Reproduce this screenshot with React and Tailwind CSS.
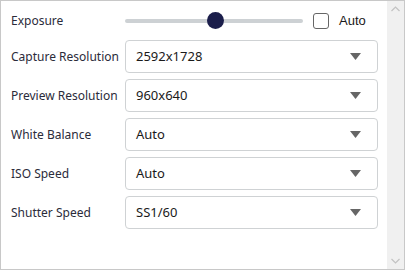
import { useState } from 'react';

const ROWS = [
  { label: 'Capture Resolution', value: '2592x1728' },
  { label: 'Preview Resolution', value: '960x640' },
  { label: 'White Balance', value: 'Auto' },
  { label: 'ISO Speed', value: 'Auto' },
  { label: 'Shutter Speed', value: 'SS1/60' },
];

function Select({ value }) {
  return (
    <div className="flex-1 h-[33px] flex items-center justify-between pl-[10px] pr-[16px] border border-[#cfd2d4] rounded-[4px] bg-white text-[13px] text-[#1a1a1a]">
      <span>{value}</span>
      <svg width="11" height="7" viewBox="0 0 11 7">
        <path d="M0 0 L11 0 L5.5 7 Z" fill="#666666" />
      </svg>
    </div>
  );
}

export default function App() {
  const [auto, setAuto] = useState(false);

  return (
    <div
      className="w-[405px] h-[270px] flex border border-[#c8c8c8] bg-white text-[#2b2b3a]"
      style={{ fontFamily: '"Noto Sans", "Open Sans", sans-serif' }}
    >
      <div className="flex-1 flex flex-col gap-[6px] pt-[6px] pl-[10px] pr-[9px]">
        {/* Exposure */}
        <div className="h-[27px] flex items-center">
          <div className="w-[114px] text-[12px]">Exposure</div>
          <div className="relative w-[178px] h-[18px] flex items-center">
            <div className="w-full h-[4px] bg-[#cdd1d4] rounded-full" />
            <div className="absolute left-[82px] w-[17px] h-[17px] rounded-full bg-[#1b1e4b]" />
          </div>
          <button
            onClick={() => setAuto(!auto)}
            className="ml-[10px] w-[16px] h-[16px] rounded-[3px] border border-[#666] bg-white"
          />
          <span className="ml-[10px] text-[13px] text-[#1a1a1a]" style={{ fontFamily: '"Liberation Sans", Arial, sans-serif' }}>
            Auto
          </span>
        </div>

        {ROWS.map((r) => (
          <div key={r.label} className="h-[33px] flex items-center">
            <div className="w-[114px] text-[12px]">{r.label}</div>
            <Select value={r.value} />
          </div>
        ))}
      </div>

      {/* Scrollbar */}
      <div className="w-[17px] bg-[#f0f0f0] flex flex-col justify-between items-center py-[5px]">
        <svg width="9" height="6" viewBox="0 0 9 6">
          <path d="M0.5 5 L4.5 1 L8.5 5" stroke="#c2c2c2" strokeWidth="1.2" fill="none" />
        </svg>
        <svg width="9" height="6" viewBox="0 0 9 6">
          <path d="M0.5 1 L4.5 5 L8.5 1" stroke="#c2c2c2" strokeWidth="1.2" fill="none" />
        </svg>
      </div>
    </div>
  );
}
